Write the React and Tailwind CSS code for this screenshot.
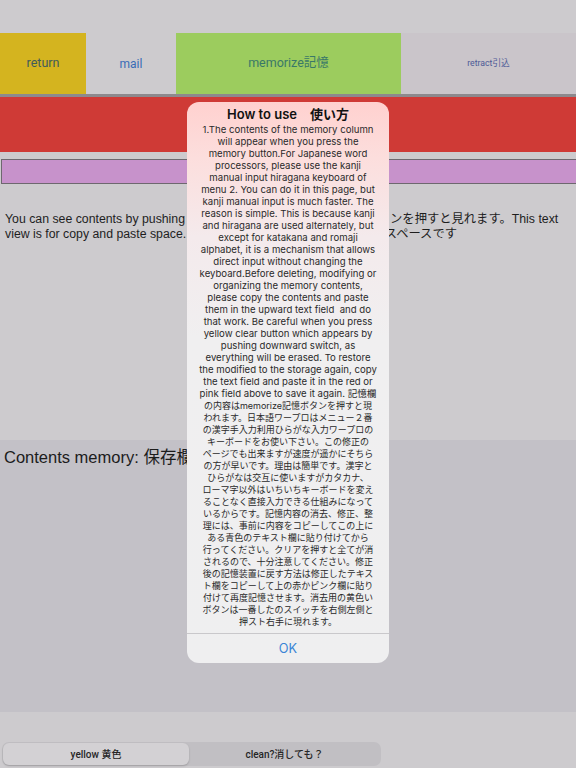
const EN = [
  "1.The contents of the memory column",
  "will appear when you press the",
  "memory button.For Japanese word",
  "processors, please use the kanji",
  "manual input hiragana keyboard of",
  "menu 2. You can do it in this page, but",
  "kanji manual input is much faster. The",
  "reason is simple. This is because kanji",
  "and hiragana are used alternately, but",
  "except for katakana and romaji",
  "alphabet, it is a mechanism that allows",
  "direct input without changing the",
  "keyboard.Before deleting, modifying or",
  "organizing the memory contents,",
  "please copy the contents and paste",
  "them in the upward text field  and do",
  "that work. Be careful when you press",
  "yellow clear button which appears by",
  "pushing downward switch, as",
  "everything will be erased. To restore",
  "the modified to the storage again, copy",
  "the text field and paste it in the red or",
  "pink field above to save it again. 記憶欄",
];

const JA = [
  "の内容はmemorize記憶ボタンを押すと現",
  "われます。日本語ワープロはメニュー２番",
  "の漢字手入力利用ひらがな入力ワープロの",
  "キーボードをお使い下さい。この修正の",
  "ページでも出来ますが速度が遥かにそちら",
  "の方が早いです。理由は簡単です。漢字と",
  "ひらがなは交互に使いますがカタカナ、",
  "ローマ字以外はいちいちキーボードを変え",
  "ることなく直接入力できる仕組みになって",
  "いるからです。記憶内容の消去、修正、整",
  "理には、事前に内容をコピーしてこの上に",
  "ある青色のテキスト欄に貼り付けてから",
  "行ってください。クリアを押すと全てが消",
  "されるので、十分注意してください。修正",
  "後の記憶装置に戻す方法は修正したテキス",
  "ト欄をコピーして上の赤かピンク欄に貼り",
  "付けて再度記憶させます。消去用の黄色い",
  "ボタンは一番したのスイッチを右側左側と",
  "押スト右手に現れます。",
];

export default function App() {
  return (
    <div className="relative w-[576px] h-[768px] overflow-hidden bg-[#cdcbce] font-['Liberation_Sans','Noto_Sans_CJK_JP',sans-serif]">
      {/* status area */}
      <div className="h-[33px]" />

      {/* button row */}
      <div className="flex h-[61px] font-['Roboto','Noto_Sans_CJK_JP',sans-serif]">
        <div className="w-[86px] bg-[#d4b41f] flex items-center justify-center text-[12.5px] text-[#3f5b5c]">
          return
        </div>
        <div className="w-[90px] flex items-center justify-center text-[12px] text-[#3a6cb6]">
          mail
        </div>
        <div className="w-[225px] bg-[#9ccc5e] flex items-center justify-center text-[12.5px] text-[#3a7868]">
          memorize記憶
        </div>
        <div className="flex-1 bg-[#cac5ca] flex items-center justify-center text-[8.7px] text-[#4c5a97]">
          retract引込
        </div>
      </div>

      <div className="h-[3px] bg-[#8d898d]" />
      <div className="h-[55px] bg-[#cf3a36]" />
      <div className="h-[7px]" />
      <div className="h-[25px] ml-[1px] border border-r-0 border-[#6e686f] bg-[#c792cb]" />

      {/* text view */}
      <div className="h-[256px] pt-[28px] px-[5px] text-[12.3px] leading-[15px] text-[#1e1e1e] whitespace-nowrap">
        <div>You can see contents by pushing memorize button. memorize記憶ボタンを押すと見れます。This text</div>
        <div>view is for copy and paste space. このビューはコピーアンドペーストスペースです</div>
      </div>

      {/* contents memory */}
      <div className="h-[272px] bg-[#c3c1c7] pt-[7px] px-[4px] text-[16.5px] leading-[20px] text-[#1c1c1c]">
        Contents memory: 保存欄
      </div>

      {/* bottom */}
      <div className="h-[56px] pt-[30px] px-[2px] font-['Roboto','Noto_Sans_CJK_JP',sans-serif]">
        <div className="w-[379px] h-[24px] rounded-[7px] bg-[#c1bfc3] p-[1px] flex text-[10px] font-medium text-[#262626]">
          <div className="w-[186px] rounded-[6px] bg-[#d3d1d4] shadow-[0_1px_2px_rgba(0,0,0,0.18)] flex items-center justify-center">
            yellow 黄色
          </div>
          <div className="flex-1 flex items-center justify-center">clean?消しても？</div>
        </div>
      </div>

      {/* alert dialog */}
      <div className="absolute left-[187px] top-[102px] w-[202px] h-[561px] rounded-[12px] overflow-hidden bg-[linear-gradient(to_bottom,#ffd1cf_0%,#fcdedd_10%,#f4eaec_24%,#f0eff0_42%,#efeff0_100%)] flex flex-col font-['Inter','Noto_Sans_CJK_JP',sans-serif]">
        <div className="pt-[4px] h-[20px] leading-[16px] text-center text-[13px] font-semibold text-[#111]">
          How to use　使い方
        </div>
        <div className="mt-[2px] flex flex-col items-center text-[9.6px] leading-[12px] text-[#2a2a2a] whitespace-pre">
          {EN.map((l, i) => (
            <div key={"e" + i}>{l}</div>
          ))}
          {JA.map((l, i) => (
            <div key={"j" + i} className="text-[9px]">{l}</div>
          ))}
        </div>
        <div className="mt-auto h-[30px] border-t border-[#c9c8cb] flex items-center justify-center text-[12.75px] text-[#3a85d6]">
          OK
        </div>
      </div>
    </div>
  );
}
